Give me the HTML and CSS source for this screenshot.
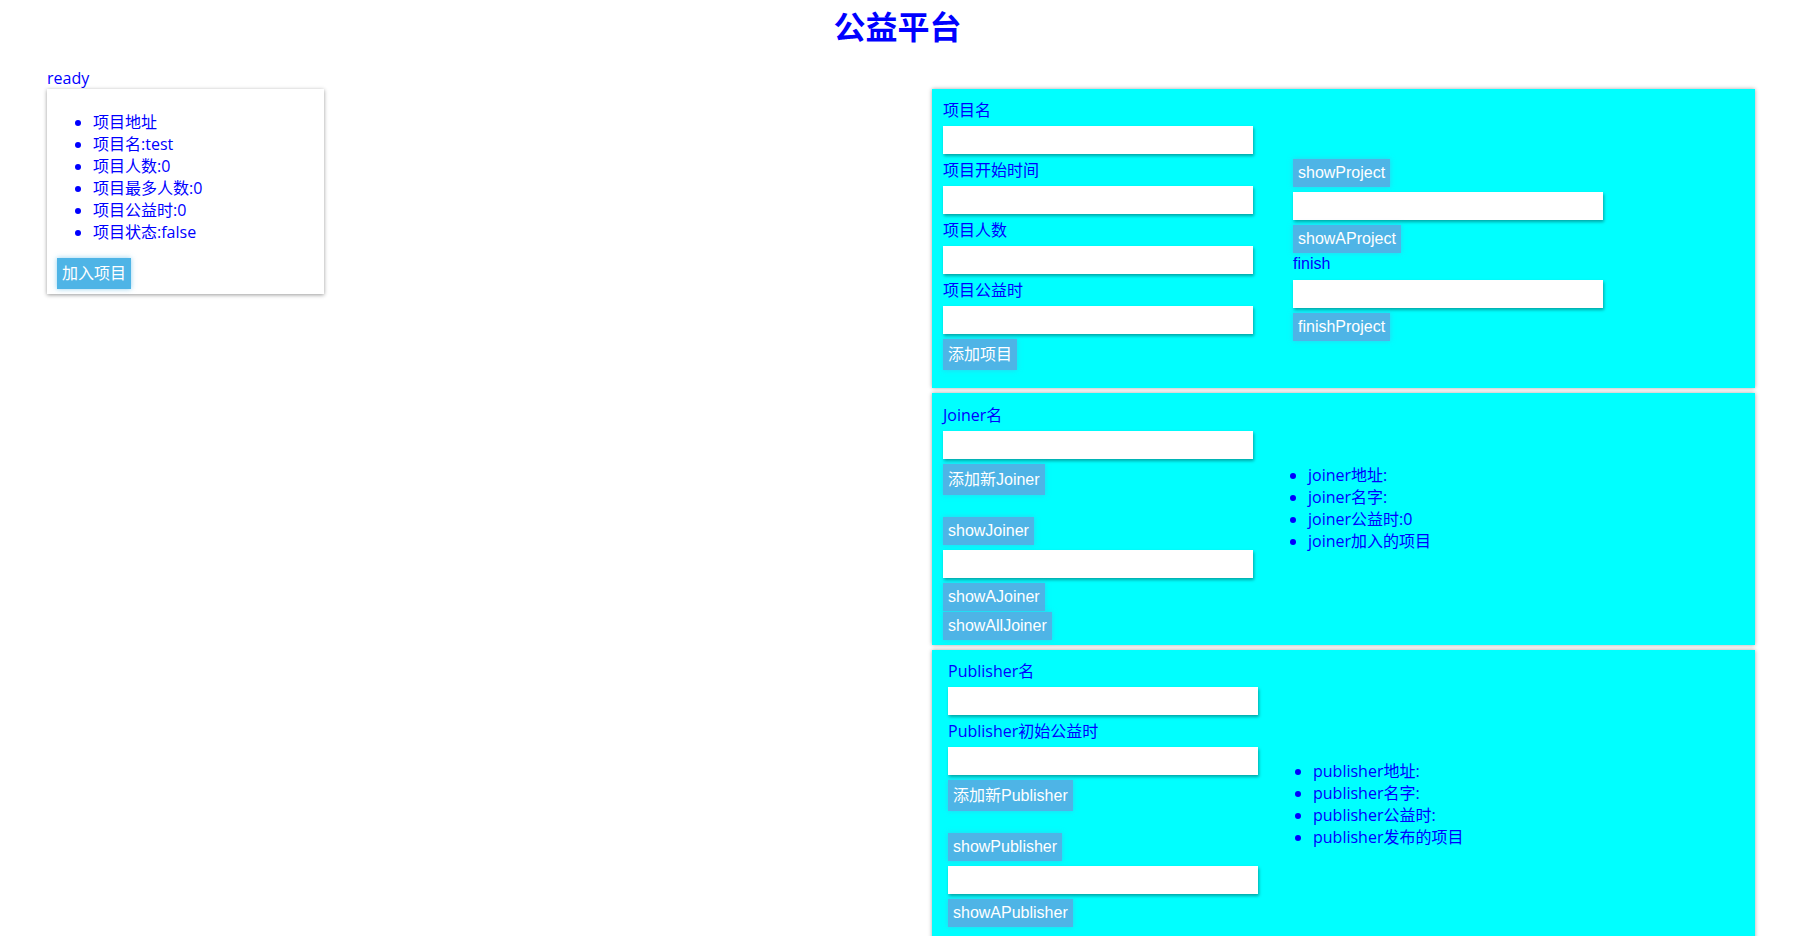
FILE: index.html
```html
<!DOCTYPE html>
<html lang="zh-CN">
<head>
<meta charset="utf-8">
<title>公益平台</title>
<link rel="stylesheet" href="styles.css">
</head>
<body>
<h1 class="title">公益平台</h1>
<div class="status">ready</div>
<div class="main">
  <div class="left">
    <div class="card">
      <ul class="info info--card">
        <li>项目地址</li>
        <li>项目名:test</li>
        <li>项目人数:0</li>
        <li>项目最多人数:0</li>
        <li>项目公益时:0</li>
        <li>项目状态:false</li>
      </ul>
      <button class="btn btn--cjk">加入项目</button>
    </div>
  </div>
  <div class="right">
    <div class="panel panel--project">
      <div class="col">
        <label class="label">项目名</label>
        <input class="field" type="text">
        <label class="label">项目开始时间</label>
        <input class="field" type="text">
        <label class="label">项目人数</label>
        <input class="field" type="text">
        <label class="label">项目公益时</label>
        <input class="field" type="text">
        <button class="btn btn--cjk">添加项目</button>
      </div>
      <div class="col side">
        <button class="btn">showProject</button>
        <input class="field" type="text">
        <button class="btn">showAProject</button>
        <label class="label label--latin">finish</label>
        <input class="field" type="text">
        <button class="btn">finishProject</button>
      </div>
    </div>
    <div class="panel panel--joiner">
      <div class="col">
        <label class="label">Joiner名</label>
        <input class="field" type="text">
        <button class="btn btn--cjk">添加新Joiner</button>
        <div class="spacer"></div>
        <button class="btn">showJoiner</button>
        <input class="field" type="text">
        <button class="btn">showAJoiner</button>
        <button class="btn btn--next">showAllJoiner</button>
      </div>
      <div class="col side">
        <ul class="info info--side">
          <li>joiner地址:</li>
          <li>joiner名字:</li>
          <li>joiner公益时:0</li>
          <li>joiner加入的项目</li>
        </ul>
      </div>
    </div>
    <div class="panel panel--publisher">
      <div class="col">
        <label class="label">Publisher名</label>
        <input class="field" type="text">
        <label class="label">Publisher初始公益时</label>
        <input class="field" type="text">
        <button class="btn btn--cjk">添加新Publisher</button>
        <div class="spacer"></div>
        <button class="btn">showPublisher</button>
        <input class="field" type="text">
        <button class="btn">showAPublisher</button>
        <div class="spacer spacer--tail"></div>
      </div>
      <div class="col side side--low">
        <ul class="info info--side">
          <li>publisher地址:</li>
          <li>publisher名字:</li>
          <li>publisher公益时:</li>
          <li>publisher发布的项目</li>
        </ul>
      </div>
    </div>
  </div>
</div>
</body>
</html>
```
FILE: styles.css
```css
html, body {
  margin: 0;
  padding: 0;
  background: #ffffff;
}

body {
  font-family: "Open Sans", "Noto Sans CJK SC", sans-serif;
  font-size: 16px;
  line-height: 22px;
  color: #0000ff;
}

.title {
  margin: 2px 15px 0 0;
  font-family: "Noto Sans CJK SC", sans-serif;
  font-size: 32px;
  font-weight: 700;
  line-height: 46px;
  text-align: center;
  color: #0000ff;
}

.status {
  margin-top: 19px;
  padding-left: 47px;
  height: 22px;
}

.main {
  display: flex;
  justify-content: space-between;
  align-items: flex-start;
  padding: 0 55px 0 47px;
}

.left {
  width: 277px;
}

.card {
  background: #ffffff;
  box-shadow: 0 1px 4px rgba(0, 0, 0, 0.4);
  padding: 6px 10px 5px 10px;
}

.info {
  margin: 0;
  list-style: disc;
}

.info--card {
  margin: 16px 0 15px 0;
  padding-left: 36px;
}

.info--side {
  padding-left: 15px;
}

.right {
  width: 823px;
  display: flex;
  flex-direction: column;
  gap: 5px;
}

.panel {
  background: #00ffff;
  box-shadow: 0 0 4px rgba(0, 0, 0, 0.35);
  display: flex;
  gap: 40px;
  padding: 10px 10px 5px 11px;
}

.panel--project {
  padding-bottom: 18px;
}

.panel--joiner {
  padding-top: 11px;
}

.panel--publisher {
  padding-left: 16px;
}

.col {
  width: 310px;
  display: flex;
  flex-direction: column;
  align-items: flex-start;
}

.side {
  padding-top: 60px;
}

.side--low {
  padding-top: 100px;
}

.label {
  display: block;
  height: 22px;
}

.label--latin {
  font-family: "Liberation Sans", "Noto Sans CJK SC", sans-serif;
}

.field {
  display: block;
  box-sizing: border-box;
  width: 310px;
  height: 28px;
  margin: 5px 0;
  border: none;
  outline: none;
  background: #ffffff;
  box-shadow: 1px 2px 3px rgba(0, 0, 0, 0.35);
  padding: 0 4px;
}

.btn {
  display: block;
  margin: 0;
  border: none;
  padding: 5px;
  background: #4eb4e6;
  color: #ffffff;
  font-family: "Liberation Sans", "Noto Sans CJK SC", sans-serif;
  font-size: 16px;
  line-height: 18px;
  box-shadow: 0 0 5px rgba(78, 180, 230, 0.6);
  cursor: pointer;
}

.btn--cjk {
  line-height: 21px;
}

.btn--next {
  margin-top: 1px;
}

.spacer {
  height: 22px;
}

.spacer--tail {
  height: 29px;
}
```
